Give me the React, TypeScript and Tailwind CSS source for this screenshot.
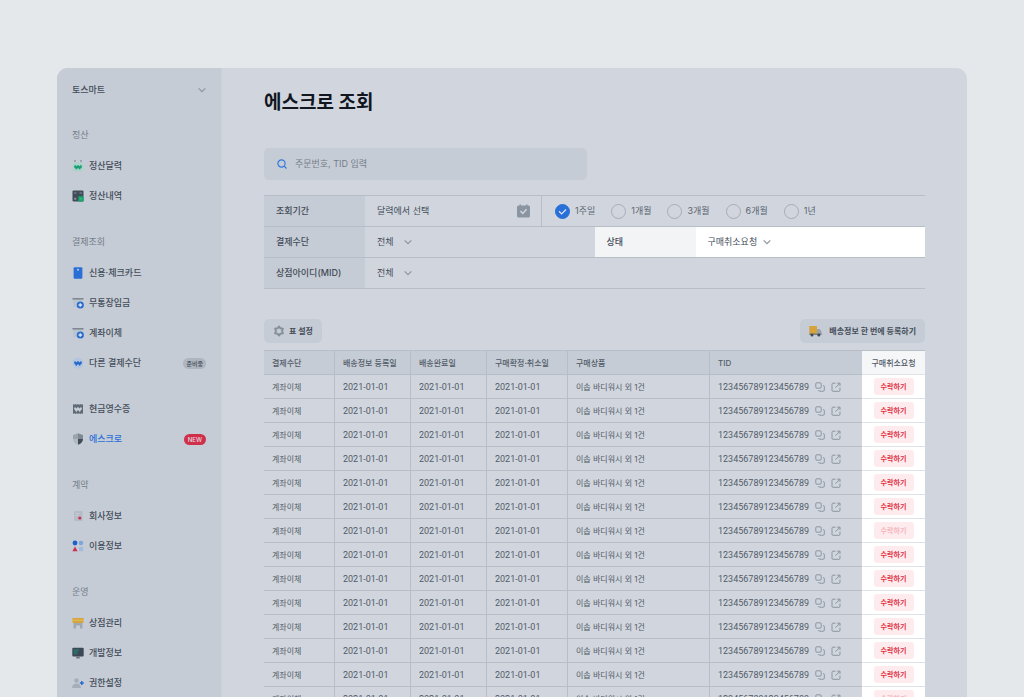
import React, { useState } from 'react';

interface MenuItem {
  label: string;
  icon: React.ReactNode;
  badge?: 'soon' | 'new';
  active?: boolean;
}

interface MenuGroup {
  title?: string;
  items: MenuItem[];
}

const Icon = ({ children }: { children: React.ReactNode }) => (
  <svg viewBox="0 0 12 12" className="size-3 shrink-0" aria-hidden="true">
    {children}
  </svg>
);

const Won = ({ color }: { color: string }) => (
  <path d="M2.8 4.5 4.4 7.8 6 5 7.6 7.8 9.2 4.5M2.200 6h7.600" fill="none" stroke={color} strokeWidth="1.700" strokeLinejoin="round" />
);

// Bank slip with a plus badge, shared by both transfer menus
const TransferIcon = () => (
  <Icon>
    <path d="M1 2.600h10v7.400H1z" fill="#b9c6ce" />
    <path d="M.5 1h11v1.600H.5z" fill="#7d8893" />
    <circle cx="8.300" cy="8" r="3.600" fill="#2b6bd0" />
    <path d="M8.300 6.200v3.600M6.500 8h3.600" stroke="#d7e3f5" strokeWidth="1.400" />
  </Icon>
);

const MENU: MenuGroup[] = [
  {
    title: '정산',
    items: [
      {
        label: '정산달력',
        icon: (
          <Icon>
            <rect x="1" y="2.500" width="10" height="9" rx="2" fill="#acd3ca" />
            <path d="M3 .3v1.500M9 .3v1.500" stroke="#69747f" strokeWidth="1.200" />
            <g transform="translate(0 .8)"><Won color="#1a9f72" /></g>
          </Icon>
        )
      },
      {
        label: '정산내역',
        icon: (
          <Icon>
            <rect x=".5" y=".5" width="11" height="11" rx="1" fill="#414c59" />
            <path d="M6.300 6.300h5.200v5.200H6.300z" fill="#18a66b" />
            <path d="M2 3h2.500M7.500 3H10M2 8.800h2.500M3.200 7.500V10" stroke="#8f99a4" strokeWidth=".9" />
            <path d="M7.800 8.800H10" stroke="#4fc393" strokeWidth=".9" />
          </Icon>
        )
      }
    ]
  },
  {
    title: '결제조회',
    items: [
      {
        label: '신용·체크카드',
        icon: (
          <Icon>
            <rect x="1.600" y=".3" width="8.800" height="11.400" rx="1" fill="#2a6fd6" />
            <circle cx="6" cy="2.800" r="1" fill="#b9d0f0" />
          </Icon>
        )
      },
      { label: '무통장입금', icon: <TransferIcon /> },
      { label: '계좌이체', icon: <TransferIcon /> },
      {
        label: '다른 결제수단',
        badge: 'soon',
        icon: (
          <Icon>
            <circle cx="6" cy="6" r="5.500" fill="#b3c6df" />
            <Won color="#2567cc" />
          </Icon>
        )
      }
    ]
  },
  {
    items: [
      {
        label: '현금영수증',
        icon: (
          <Icon>
            <path d="M1 1l1.300.8L3.500 1l1.300.8L6 1l1.200.8L8.500 1l1.200.8L11 1v10l-1.300-.8L8.500 11l-1.300-.8L6 11l-1.200-.8L3.500 11l-1.200-.8L1 11z" fill="#606b77" />
            <Won color="#c9cfd7" />
          </Icon>
        )
      },
      {
        label: '에스크로',
        badge: 'new',
        active: true,
        icon: (
          <Icon>
            <path d="M6 .3 1 2v4h5z" fill="#9ba4ae" />
            <path d="M1 6h5v5.800C3.400 10.800 1 9 1 6z" fill="#b0b8c1" />
            <path d="M6 .3 11 2v4H6z" fill="#7f8994" />
            <path d="M6 6h5c0 3-2.400 4.800-5 5.800z" fill="#414d5a" />
          </Icon>
        )
      }
    ]
  },
  {
    title: '계약',
    items: [
      {
        label: '회사정보',
        icon: (
          <Icon>
            <rect x="2" y="1" width="8.500" height="10" rx="1" fill="#b5bcc6" />
            <path d="M3.500 3.500h4M3.500 5.500h3" stroke="#c9cfd7" strokeWidth=".8" />
            <circle cx="7.800" cy="8" r="1.600" fill="#c4314f" />
          </Icon>
        )
      },
      {
        label: '이용정보',
        icon: (
          <Icon>
            <circle cx="3" cy="3" r="2.400" fill="#1d62c6" />
            <circle cx="9" cy="3" r="2.300" fill="#7da6da" />
            <path d="M3 6.600 5.600 11.300H.4z" fill="#d02c4f" />
            <rect x="6.900" y="6.800" width="4.400" height="4.400" rx="1" fill="#a3bcdc" />
          </Icon>
        )
      }
    ]
  },
  {
    title: '운영',
    items: [
      {
        label: '상점관리',
        icon: (
          <Icon>
            <path d="M1.500 5.500h9V11.500H8V8.500H4v3H1.500z" fill="#9fa7b0" />
            <path d="M.4 1h11.200v4a1 1 0 0 1-1 1H1.400a1 1 0 0 1-1-1z" fill="#d6a53c" />
            <path d="M.4 3.200h11.200" stroke="#e5c56f" strokeWidth=".8" />
          </Icon>
        )
      },
      {
        label: '개발정보',
        icon: (
          <Icon>
            <rect x=".3" y=".8" width="11.400" height="8.700" rx="1" fill="#3c4855" />
            <path d="M1.500 2h6L5 7.500H1.500z" fill="#2d6a66" />
            <path d="M4.300 9.500h3.400v2H4.300z" fill="#66717d" />
          </Icon>
        )
      },
      {
        label: '권한설정',
        icon: (
          <Icon>
            <circle cx="4.500" cy="3.500" r="2.300" fill="#a6afb9" />
            <path d="M0 11c0-3 1.800-4.500 4.500-4.500S9 8 9 11z" fill="#a6afb9" />
            <path d="M9.800 4v4M7.800 6h4" stroke="#2b6bd0" strokeWidth="1.500" />
          </Icon>
        )
      }
    ]
  }
];

const PERIODS = ['1주일', '1개월', '3개월', '6개월', '1년'];

const HEADERS = ['결제수단', '배송정보 등록일', '배송완료일', '구매확정·취소일', '구매상품', 'TID'];

const ROWS = Array.from({ length: 14 }, (_, i) => ({
  method: '계좌이체',
  registered: '2021-01-01',
  delivered: '2021-01-01',
  confirmed: '2021-01-01',
  product: '이솝 바디워시 외 1건',
  tid: '123456789123456789',
  done: i === 6 || i === 13
}));

const Chevron = () => (
  <svg viewBox="0 0 8 8" className="pointer-events-none size-2 shrink-0" aria-hidden="true">
    <path d="M.7 2.300 4 5.600l3.300-3.300" fill="none" stroke="#8d96a2" strokeWidth="1.200" />
  </svg>
);

const Picker = ({ id, value, wide }: { id: string; value: string; wide?: boolean }) => (
  <div className={`flex items-center ${wide ? 'gap-1.5' : 'gap-2.5'}`}>
    <select id={id} className="[field-sizing:content] appearance-none bg-transparent outline-none">
      <option>{value}</option>
    </select>
    <Chevron />
  </div>
);

const Sidebar = () => (
  <aside className="w-[165px] shrink-0 border-r border-[#cbd0d9] bg-[#c6ccd5] px-[15px] pt-2.5 text-[9px] font-medium text-[#434c59]">
    <button className="flex h-6 w-full items-center justify-between">
      토스마트
      <Chevron />
    </button>
    <nav className="mt-[18px] flex flex-col gap-4">
      {MENU.map((group, i) => (
        <section key={i}>
          {group.title && <h2 className="mb-px flex h-[30px] items-center font-normal text-[#737d89]">{group.title}</h2>}
          <ul>
            {group.items.map(item => (
              <li key={item.label}>
                <a href="#" className={`flex h-[30px] items-center gap-[5px] ${item.active ? 'text-[#2b6fd8]' : ''}`}>
                  {item.icon}
                  {item.label}
                  {item.badge === 'soon' && (
                    <span className="ml-auto rounded-full bg-[#aeb5bf] px-[3px] text-[6px] leading-[11px] text-[#434c59]">준비중</span>
                  )}
                  {item.badge === 'new' && (
                    <span className="ml-auto rounded-full bg-[#cf2f49] px-1 text-[6px] leading-[11px] text-[#e6dce2]">NEW</span>
                  )}
                </a>
              </li>
            ))}
          </ul>
        </section>
      ))}
    </nav>
  </aside>
);

const Filters = () => {
  const [period, setPeriod] = useState(PERIODS[0]);
  const labelClass = 'flex w-[101px] shrink-0 items-center self-stretch bg-[#c6ccd5] pl-3 font-medium';
  const rowClass = 'flex h-[31px] items-center border-b border-[#b7bec8]';

  return (
    <div className="mt-[15px] border-t border-[#b7bec8] text-[9px] text-[#434c59]">
      <div className={rowClass}>
        <label htmlFor="calendar" className={labelClass}>조회기간</label>
        <button id="calendar" className="flex w-[177px] items-center justify-between self-stretch border-r border-[#b7bec8] pl-3 pr-[11px]">
          달력에서 선택
          <svg viewBox="0 0 13 14" className="h-3.5 w-[13px]" aria-hidden="true">
            <path d="M1.500 1.500h1V.5h1.500v1h5v-1h1.500v1h1A1.500 1.500 0 0 1 13 3v9a1.500 1.500 0 0 1-1.500 1.500h-10A1.500 1.500 0 0 1 0 12V3a1.500 1.500 0 0 1 1.500-1.500z" fill="#8b95a1" />
            <path d="m3.500 7 2.300 2.400L9.600 5.300" fill="none" stroke="#d1d6de" strokeWidth="1.500" />
          </svg>
        </button>
        <div className="flex items-center gap-4 pl-[13px] text-[#5b6571]">
          {PERIODS.map(p => (
            <label key={p} className="flex items-center gap-[5px]">
              <span className="relative flex">
                <input
                  type="radio"
                  name="period"
                  checked={period === p}
                  onChange={() => setPeriod(p)}
                  className="size-[15px] appearance-none rounded-full border border-[#a5adb8] checked:border-[#2770d8] checked:bg-[#2770d8]"
                />
                {period === p && (
                  <svg viewBox="0 0 15 15" className="pointer-events-none absolute inset-0" aria-hidden="true">
                    <path d="m4 7.300 2.600 2.600L11 5.500" fill="none" stroke="#d6e2f4" strokeWidth="1.300" />
                  </svg>
                )}
              </span>
              {p}
            </label>
          ))}
        </div>
      </div>
      <div className={rowClass}>
        <div className="flex flex-1 items-center self-stretch">
          <label htmlFor="method" className={labelClass}>결제수단</label>
          <div className="pl-3"><Picker id="method" value="전체" /></div>
        </div>
        <div className="flex flex-1 items-center self-stretch bg-white">
          <label htmlFor="status" className="flex w-[101px] shrink-0 items-center self-stretch bg-[#f3f4f6] pl-3 font-medium">상태</label>
          <div className="pl-3"><Picker id="status" value="구매취소요청" wide /></div>
        </div>
      </div>
      <div className={rowClass}>
        <label htmlFor="mid" className={labelClass}>상점아이디(MID)</label>
        <div className="pl-3"><Picker id="mid" value="전체" /></div>
      </div>
    </div>
  );
};

const OrderTable = () => {
  const cell = 'h-6 border-b border-r border-[#b7bec8] p-0 pl-2 text-left whitespace-nowrap';
  const numeric = "font-['Roboto',sans-serif] text-[9px]";

  return (
    <table className="mt-[7px] w-full table-fixed border-separate border-spacing-0 border-t border-[#b7bec8] text-[8px] leading-3 text-[#525c69]">
      <colgroup>
        <col className="w-[71px]" />
        <col className="w-[76px]" />
        <col className="w-[76px]" />
        <col className="w-[81px]" />
        <col />
        <col className="w-[152px]" />
        <col className="w-[63px]" />
      </colgroup>
      <thead>
        <tr>
          {HEADERS.map(h => (
            <th key={h} className={`${cell} bg-[#c6ccd5] font-medium ${h === 'TID' ? 'border-r-0' : ''}`}>{h}</th>
          ))}
          <th className="h-6 border-b border-[#dfe2e6] bg-[#f5f6f8] p-0 text-center font-medium">구매취소요청</th>
        </tr>
      </thead>
      <tbody>
        {ROWS.map((row, i) => (
          <tr key={i}>
            <td className={cell}>{row.method}</td>
            <td className={`${cell} ${numeric}`}>{row.registered}</td>
            <td className={`${cell} ${numeric}`}>{row.delivered}</td>
            <td className={`${cell} ${numeric}`}>{row.confirmed}</td>
            <td className={cell}>{row.product}</td>
            <td className={`${cell} ${numeric} border-r-0`}>
              <div className="flex items-center gap-1.5">
                {row.tid}
                <button aria-label="복사">
                  <svg viewBox="0 0 10 10" className="size-2.5" fill="none" stroke="#8b95a1" strokeWidth="1">
                    <rect x=".8" y=".8" width="5.400" height="5.400" rx="1" />
                    <path d="M8 3.600h.4a.9.9 0 0 1 .9.9v3.800a.9.9 0 0 1-.9.9H4.600a.9.9 0 0 1-.9-.9V8" />
                  </svg>
                </button>
                <button aria-label="새 창으로 열기">
                  <svg viewBox="0 0 10 10" className="size-2.5" fill="none" stroke="#8b95a1" strokeWidth="1">
                    <path d="M4.500 1.200H2a1 1 0 0 0-1 1V8.300a1 1 0 0 0 1 1h6a1 1 0 0 0 1-1V5.500M6.200 1.200H9V4M9 1.200 4.600 5.600" />
                  </svg>
                </button>
              </div>
            </td>
            <td className="h-6 border-b border-[#dfe2e6] bg-white p-0">
              <button
                disabled={row.done}
                className="mx-auto block h-[17px] w-10 rounded-[3px] bg-[#fdebed] text-[7px] font-bold text-[#e02f44] disabled:text-[#f6b5bd]"
              >
                수락하기
              </button>
            </td>
          </tr>
        ))}
      </tbody>
    </table>
  );
};

export default function App() {
  return (
    <div className="h-screen overflow-hidden bg-[#e4e8eb] px-[57px] pt-[68px] font-['Inter','Noto_Sans_CJK_KR',sans-serif]">
      <div className="flex overflow-hidden rounded-t-[11px] bg-[#d1d6de]">
        <Sidebar />
        <main className="min-w-0 flex-1 px-[42px] pt-[23px]">
          <h1 className="text-[19px] font-bold leading-6 text-[#11161f]">에스크로 조회</h1>
          <label className="mt-[33px] flex h-8 w-[323px] items-center gap-2 rounded-[5px] bg-[#c6ccd5] px-[13px]">
            <svg viewBox="0 0 10 10" className="size-2.5 shrink-0" fill="none" stroke="#3478dc" strokeWidth="1.200" aria-hidden="true">
              <circle cx="4.500" cy="4.500" r="3.600" />
              <path d="m7.200 7.200 2.300 2.300" />
            </svg>
            <input
              type="search"
              aria-label="검색"
              placeholder="주문번호, TID 입력"
              className="w-full bg-transparent text-[9px] outline-none placeholder:text-[#737d89]"
            />
          </label>

          <Filters />

          <div className="mt-[30px] flex justify-between text-[8px] font-bold text-[#434c59]">
            <button className="flex h-6 items-center gap-1 rounded-[5px] bg-[#c6ccd5] px-[9px]">
              <svg viewBox="0 0 12 12" className="size-3" aria-hidden="true">
                <path
                  d="M6 1.400 7.300 3.200 9.900 3.600 9 6 9.900 8.400 7.300 8.800 6 10.600 4.700 8.800 2.100 8.400 3 6 2.100 3.600 4.700 3.200z"
                  fill="none"
                  stroke="#858f9a"
                  strokeWidth="1.900"
                  strokeLinejoin="round"
                />
              </svg>
              표 설정
            </button>
            <button className="flex h-6 items-center gap-[7px] rounded-[5px] bg-[#c6ccd5] px-[9px]">
              <svg viewBox="0 0 13 12" className="h-3 w-[13px]" aria-hidden="true">
                <rect x=".3" y="1" width="7.700" height="8" rx=".6" fill="#d5a23b" />
                <path d="M8 4h2.600L12.500 6.500V9.500H8z" fill="#9aa3ad" />
                <path d="M.3 8.600h12.200v1.200H.3z" fill="#66707c" />
                <circle cx="3" cy="10" r="1.500" fill="#3f4955" />
                <circle cx="9.800" cy="10" r="1.500" fill="#3f4955" />
              </svg>
              배송정보 한 번에 등록하기
            </button>
          </div>

          <OrderTable />
        </main>
      </div>
    </div>
  );
}
